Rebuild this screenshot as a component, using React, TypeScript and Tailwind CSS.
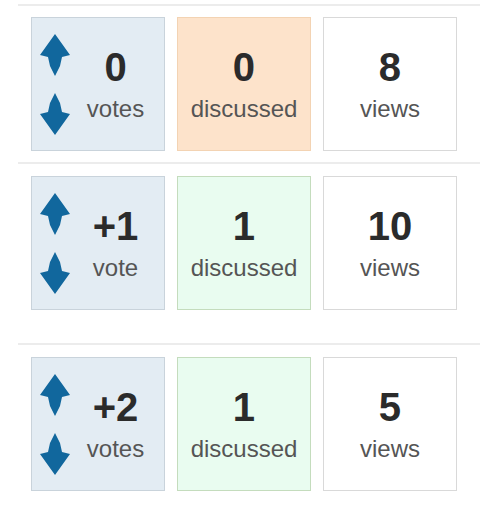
import React from "react";

type Post = {
  score: string;
  votesLabel: string;
  answers: number;
  views: number;
};

const posts: Post[] = [
  { score: "0", votesLabel: "votes", answers: 0, views: 8 },
  { score: "+1", votesLabel: "vote", answers: 1, views: 10 },
  { score: "+2", votesLabel: "votes", answers: 1, views: 5 },
];

// fat arrow with a tapered tail, points up by default
function VoteArrow({ down = false }: { down?: boolean }) {
  return (
    <svg
      width="32"
      height="42"
      viewBox="0 0 32 42"
      className={down ? "rotate-180" : ""}
    >
      <polygon
        points="16,0 31,21 23,23 21,32 16,42 11,32 9,23 1,21"
        fill="#11679d"
      />
    </svg>
  );
}

function Stat({ value, label }: { value: string | number; label: string }) {
  return (
    <div className="flex flex-col items-center gap-[10px]">
      <span className="text-[40px] leading-[40px] font-bold text-[#2b2b2b]">
        {value}
      </span>
      <span className="text-[24px] leading-[24px] text-[#555]">{label}</span>
    </div>
  );
}

function PostRow({ post }: { post: Post }) {
  const answered = post.answers > 0;
  return (
    <div className="flex gap-3 pl-[13px]">
      {/* votes */}
      <div className="w-[134px] h-[134px] flex items-center border border-[#c9d3db] bg-[#e3ecf3] pl-[7px]">
        <div className="flex flex-col gap-[17px]">
          <VoteArrow />
          <VoteArrow down />
        </div>
        <div className="flex-1 flex justify-center pr-[4px]">
          <Stat value={post.score} label={post.votesLabel} />
        </div>
      </div>

      {/* answers */}
      <div
        className={
          answered
            ? "w-[134px] h-[134px] flex items-center justify-center border border-[#c4dcbd] bg-[#e9fcf0]"
            : "w-[134px] h-[134px] flex items-center justify-center border border-[#f3d3b3] bg-[#fde3cb]"
        }
      >
        <Stat value={post.answers} label="discussed" />
      </div>

      {/* views */}
      <div className="w-[134px] h-[134px] flex items-center justify-center border border-[#d9d9d9] bg-white">
        <Stat value={post.views} label="views" />
      </div>
    </div>
  );
}

export default function App() {
  return (
    <div
      className="w-[480px] h-[508px] bg-white pl-[18px] pt-[4px]"
      style={{ fontFamily: '"Liberation Sans", Arial, sans-serif' }}
    >
      <div className="border-t-2 border-[#ececec]" />
      <div className="pt-[11px] pb-[11px]">
        <PostRow post={posts[0]} />
      </div>
      <div className="border-t-2 border-[#ececec]" />
      <div className="pt-[12px] pb-[33px]">
        <PostRow post={posts[1]} />
      </div>
      <div className="border-t-2 border-[#ececec]" />
      <div className="pt-[12px]">
        <PostRow post={posts[2]} />
      </div>
    </div>
  );
}
